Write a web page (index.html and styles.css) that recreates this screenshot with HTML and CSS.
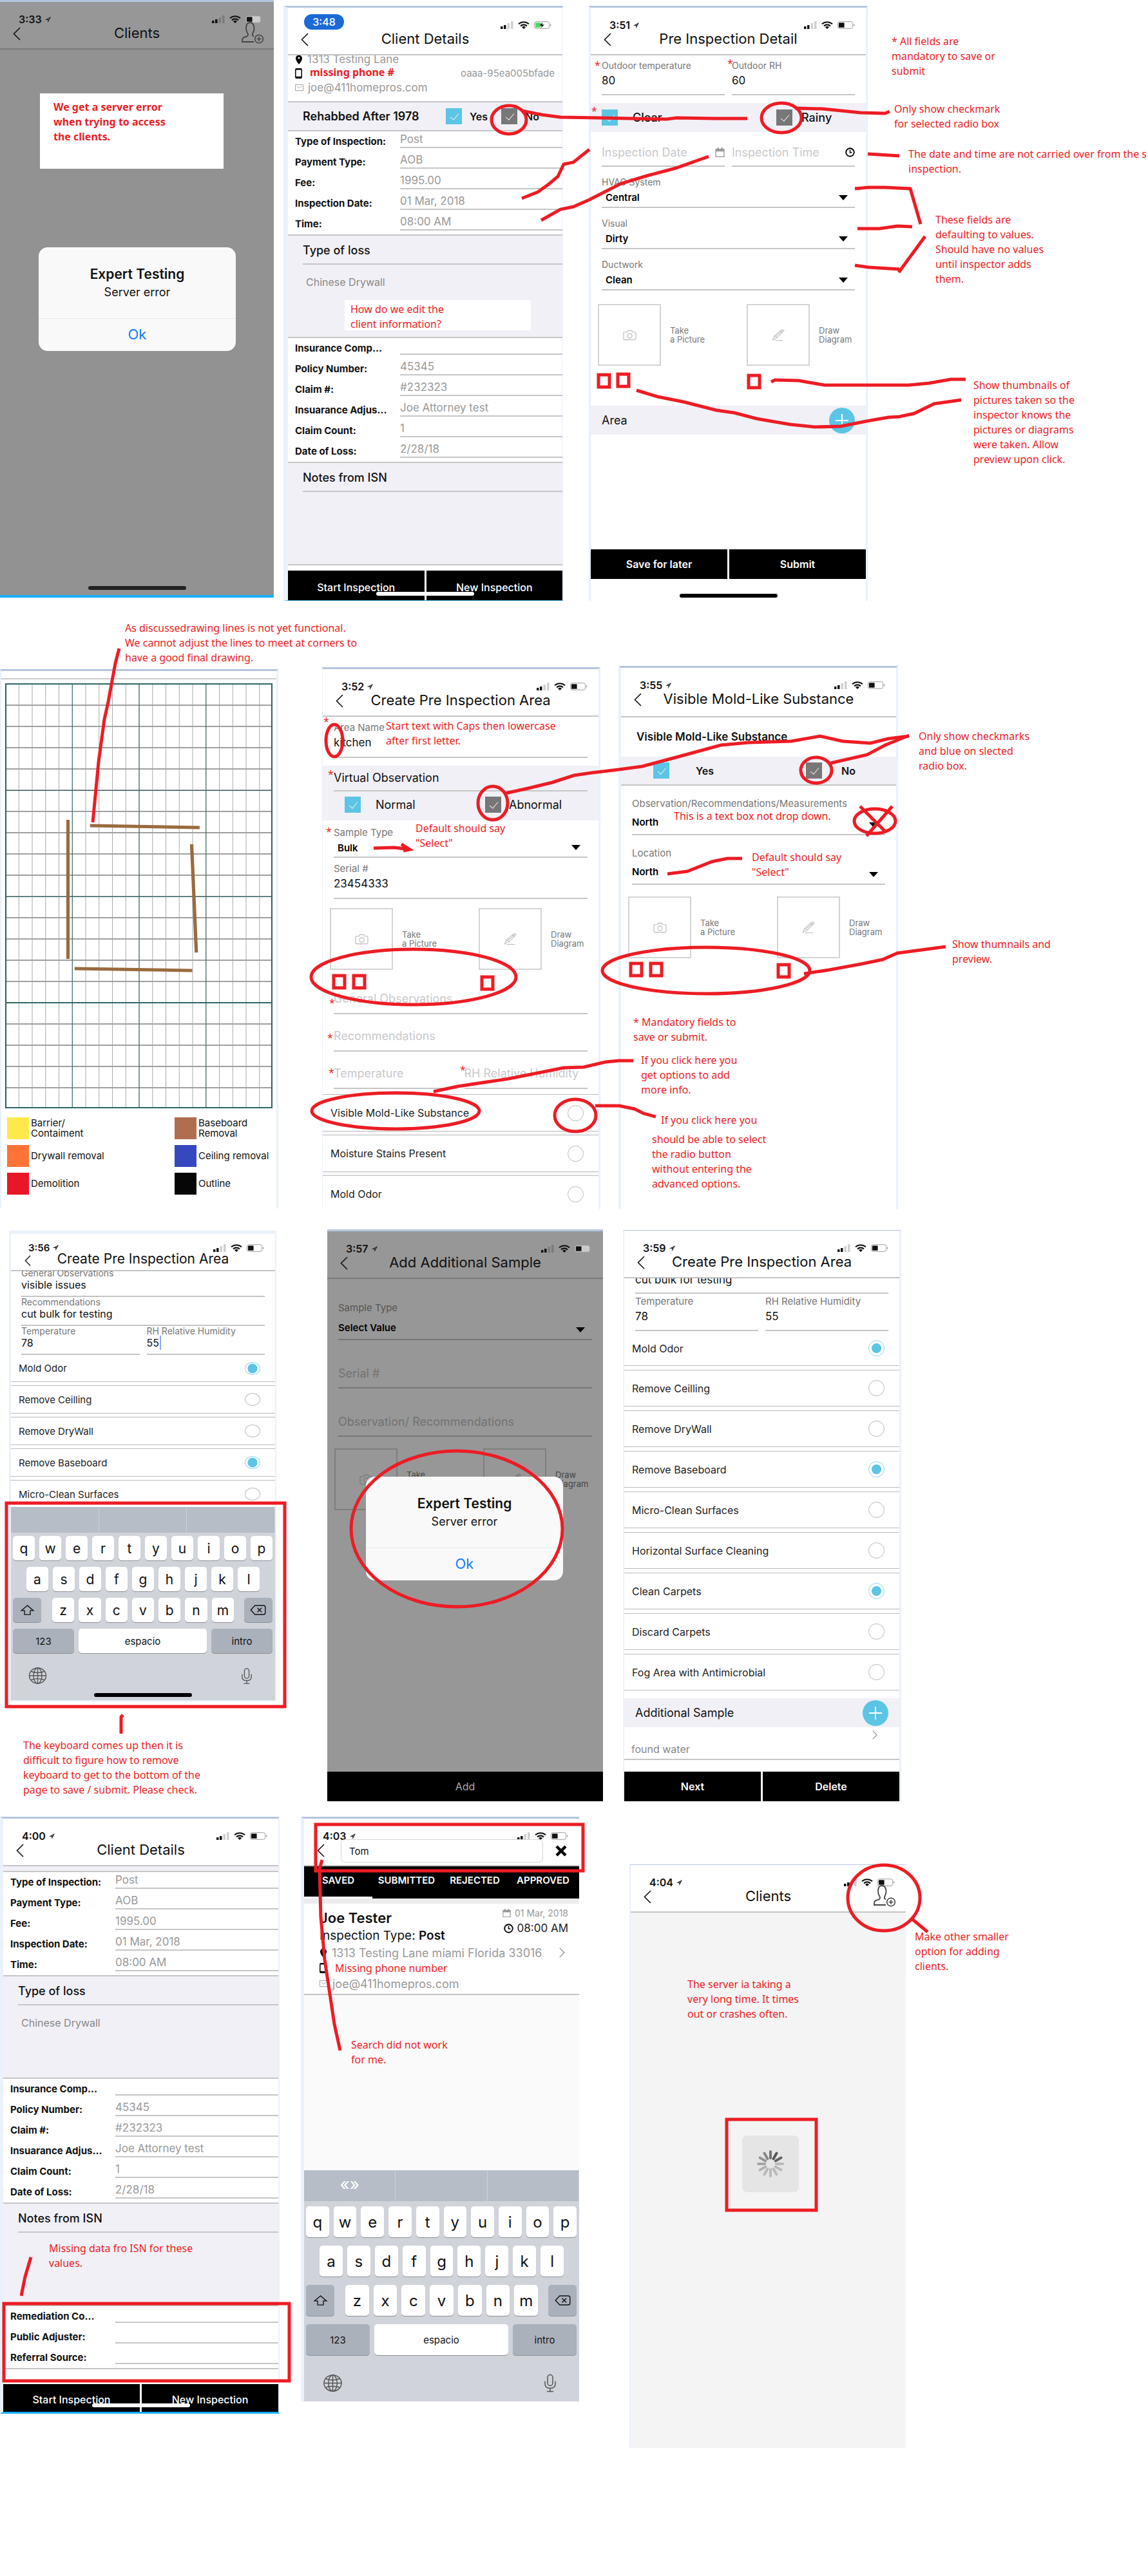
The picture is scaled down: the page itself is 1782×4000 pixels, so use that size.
FILE: index.html
```html
<!DOCTYPE html>
<html lang="en">
<head>
<meta charset="utf-8">
<meta name="viewport" content="width=device-width, initial-scale=1">
<title>Inspection app review board</title>
<link rel="stylesheet" href="styles.css">
</head>
<body>
<svg class="defs" aria-hidden="true">
  <symbol id="i-loc" viewBox="0 0 12 12"><path d="M11 1 1 6.200h4.800V11z" fill="currentColor"/><path d="M8.600 3.300 5 5.200h1.800v2z" fill="#fff" opacity=".5"/></symbol>
  <symbol id="i-signal" viewBox="0 0 20 12"><path d="M0 8h3.500v4H0zM5 6h3.500v6H5z" fill="currentColor"/><path d="M10.500 3H14v9h-3.500zM16 0h3.500v12H16z" fill="currentColor" opacity=".2"/></symbol>
  <symbol id="i-wifi" viewBox="0 0 18 12"><path d="M1 4.300a12 12 0 0 1 16 0M4 7.300a7.600 7.600 0 0 1 10 0" fill="none" stroke="currentColor" stroke-width="2.200"/><path d="M9 12 6 9.200a4.500 4.500 0 0 1 6 0z" fill="currentColor"/></symbol>
  <symbol id="i-batt" viewBox="0 0 28 12"><rect x=".5" y=".5" width="24" height="11" rx="3" fill="#fff" fill-opacity=".5" stroke="#999"/><path d="M26 4v4q1.500-.5 1.500-2T26 4z" fill="#999"/><rect x="2" y="2" width="9" height="8" rx="1" fill="currentColor"/></symbol>
  <symbol id="i-charge" viewBox="0 0 28 12"><rect x=".5" y=".5" width="24" height="11" rx="3" fill="#fff" stroke="#999"/><path d="M26 4v4q1.500-.5 1.500-2T26 4z" fill="#999"/><rect x="2" y="2" width="9" height="8" rx="1" fill="#4cd964"/><path d="M14 1 8 7h4l-1 4 6-6h-4z" fill="#000" stroke="#fff" stroke-width=".5"/></symbol>
  <symbol id="i-back" viewBox="0 0 12 21"><path d="M11 1 1.500 10.500 11 20" fill="none" stroke="currentColor" stroke-width="1.600"/></symbol>
  <symbol id="i-user" viewBox="0 0 34 34"><path d="M19 31H1v-4q1-3 6-4 3-1 3-3 0-2-1.500-4-1.500-3-1.500-6 0-9 6-9t6.500 9q0 4-1.500 6-1.500 3-1 5l2 1.500" fill="none" stroke="currentColor" stroke-width="1.800"/><circle cx="27" cy="26.500" r="6.300" fill="none" stroke="currentColor" stroke-width="1.600"/><path d="M27 23v7M23.500 26.500h7" stroke="currentColor" stroke-width="1.600"/></symbol>
  <symbol id="i-cam" viewBox="0 0 22 17"><path d="M3 3.500h3.500L8 1h6l1.500 2.500H19q2 0 2 2V14q0 2-2 2H3q-2 0-2-2V5.500q0-2 2-2z" fill="none" stroke="currentColor" stroke-width="1.200"/><circle cx="11" cy="9.500" r="3.800" fill="none" stroke="currentColor" stroke-width="1.200"/></symbol>
  <symbol id="i-pen" viewBox="0 0 22 20"><path d="M1.500 18 4 12 16 1.500q2-1 4 1.500L8.500 14.500zM4 12q3 0 4.500 2.500M6 13 17.500 3M14 3.500l4 2.500M5 19h13" fill="none" stroke="currentColor" stroke-width="1.100"/></symbol>
  <symbol id="i-cal" viewBox="0 0 15 15"><path d="M1 3h13v11.500H1zM1 5.500h13" fill="none" stroke="currentColor" stroke-width="1.300"/><path d="M1 3h13v3H1zM3 .500h3V4H3zM9 .500h3V4H9z" fill="currentColor"/></symbol>
  <symbol id="i-clock" viewBox="0 0 16 16"><circle cx="8" cy="8" r="6.700" fill="none" stroke="currentColor" stroke-width="2"/><path d="M8 4v4.500h3" fill="none" stroke="currentColor" stroke-width="1.600"/></symbol>
  <symbol id="i-pin" viewBox="0 0 12 15"><path d="M6 15Q1 9 1 5.500a5 5 0 0 1 10 0Q11 9 6 15z" fill="currentColor"/><circle cx="6" cy="5" r="1.500" fill="#fff"/></symbol>
  <symbol id="i-phone" viewBox="0 0 11 16"><rect x=".8" y=".8" width="9.400" height="14.400" rx="1.500" fill="none" stroke="currentColor" stroke-width="1.500"/><path d="M1 12.800h9v2H1zM1 1h9v1.500H1z" fill="currentColor"/></symbol>
  <symbol id="i-mail" viewBox="0 0 14 11"><path d="M.5.5h13v10H.5zM3 3l4 3.500L11 3" fill="none" stroke="currentColor"/></symbol>
  <symbol id="i-plus" viewBox="0 0 40 40"><circle cx="20" cy="20" r="20" fill="#5cc5e5"/><path d="M20 10v20M10 20h20" stroke="#fff" stroke-width="2"/></symbol>
  <symbol id="i-shift" viewBox="0 0 24 18"><path d="M12 1 1.500 10H7v7h10v-7h5.500z" fill="none" stroke="currentColor" stroke-width="1.500"/></symbol>
  <symbol id="i-del" viewBox="0 0 26 17"><path d="M8 1h14q3 0 3 3v9q0 3-3 3H8L1 8.500zM12 5l7 7M19 5l-7 7" fill="none" stroke="currentColor" stroke-width="1.500"/></symbol>
  <symbol id="i-globe" viewBox="0 0 30 28"><g fill="none" stroke="currentColor" stroke-width="1.500"><ellipse cx="15" cy="14" rx="14" ry="13"/><ellipse cx="15" cy="14" rx="7" ry="13"/><path d="M15 1v26M1 14h28M4 7q11 4 22 0M4 21q11-4 22 0"/></g></symbol>
  <symbol id="i-mic" viewBox="0 0 18 28"><g fill="none" stroke="currentColor" stroke-width="1.500"><rect x="5" y="1" width="8" height="17" rx="4"/><path d="M1 11v4q0 7 8 7t8-7v-4M9 22v5M4 27h10"/></g></symbol>
</svg>

<main class="board">

<section class="screen s1 dim">
  <header class="top"><div class="status"><b>3:33</b><svg class="loc"><use href="#i-loc"/></svg><svg class="sig"><use href="#i-signal"/></svg><svg class="wifi"><use href="#i-wifi"/></svg><svg class="batt"><use href="#i-batt"/></svg></div>
  <div class="bar"><button class="back" aria-label="Back"><svg><use href="#i-back"/></svg></button><h2>Clients</h2><button class="user" aria-label="Add client"><svg><use href="#i-user"/></svg></button></div></header>
  <div class="alert"><h3>Expert Testing</h3><p>Server error</p><button>Ok</button></div>
  <i class="home dark"></i>
</section>

<section class="screen s2">
  <header class="top"><div class="status"><b class="pill">3:48</b><svg class="sig"><use href="#i-signal"/></svg><svg class="wifi"><use href="#i-wifi"/></svg><svg class="batt"><use href="#i-charge"/></svg></div>
  <div class="bar"><button class="back" aria-label="Back"><svg><use href="#i-back"/></svg></button><h2>Client Details</h2></div></header>
  <div class="contact">
    <p><svg class="pin"><use href="#i-pin"/></svg>1313 Testing Lane</p>
    <p><svg class="cell"><use href="#i-phone"/></svg><span class="id">oaaa-95ea005bfade</span></p>
    <p><svg class="mail"><use href="#i-mail"/></svg>joe@411homepros.com</p>
  </div>
  <div class="band line rehab"><strong>Rehabbed After 1978</strong><label><input type="checkbox" class="on" checked>Yes</label><label><input type="checkbox" checked>No</label></div>
  <div class="kvs">
    <label><span>Type of Inspection:</span><input value="Post"></label>
    <label><span>Payment Type:</span><input value="AOB"></label>
    <label><span>Fee:</span><input value="1995.00"></label>
    <label><span>Inspection Date:</span><input value="01 Mar, 2018"></label>
    <label><span>Time:</span><input value="08:00 AM"></label>
  </div>
  <div class="block"><h3>Type of loss</h3><p>Chinese Drywall</p></div>
  <div class="kvs">
    <label><span>Insurance Comp...</span><input value=""></label>
    <label><span>Policy Number:</span><input value="45345"></label>
    <label><span>Claim #:</span><input value="#232323"></label>
    <label><span>Insuarance Adjus...</span><input value="Joe Attorney test"></label>
    <label><span>Claim Count:</span><input value="1"></label>
    <label><span>Date of Loss:</span><input value="2/28/18"></label>
  </div>
  <div class="block"><h3>Notes from ISN</h3></div>
  <footer class="actions"><button>Start Inspection</button><button>New Inspection</button></footer>
  <i class="home light"></i>
</section>

<section class="screen s3">
  <header class="top"><div class="status"><b>3:51</b><svg class="loc"><use href="#i-loc"/></svg><svg class="sig"><use href="#i-signal"/></svg><svg class="wifi"><use href="#i-wifi"/></svg><svg class="batt"><use href="#i-batt"/></svg></div>
  <div class="bar"><button class="back" aria-label="Back"><svg><use href="#i-back"/></svg></button><h2>Pre Inspection Detail</h2></div></header>
  <div class="duo"><label class="field">Outdoor temperature<input value="80"></label><label class="field">Outdoor RH<input value="60"></label></div>
  <div class="band gap weather"><label><input type="checkbox" class="on" checked>Clear</label><label><input type="checkbox" checked>Rainy</label></div>
  <div class="duo ph"><label><input placeholder="Inspection Date" aria-label="Inspection Date"><svg class="cal"><use href="#i-cal"/></svg></label><label><input placeholder="Inspection Time" aria-label="Inspection Time"><svg class="clock"><use href="#i-clock"/></svg></label></div>
  <label class="pick in">HVAC System<select><option>Central</option></select></label>
  <label class="pick in">Visual<select><option>Dirty</option></select></label>
  <label class="pick in">Ductwork<select><option>Clean</option></select></label>
  <div class="shots"><div><button aria-label="Take a Picture"><svg class="cam"><use href="#i-cam"/></svg></button><span>Take<br>a Picture</span></div><div><button aria-label="Draw Diagram"><svg class="pen"><use href="#i-pen"/></svg></button><span>Draw<br>Diagram</span></div></div>
  <div class="band add"><span>Area</span><button aria-label="Add area"><svg><use href="#i-plus"/></svg></button></div>
  <footer class="actions bold"><button>Save for later</button><button>Submit</button></footer>
  <i class="home black"></i>
</section>

<section class="screen s4">
  <svg class="grid" viewBox="0 0 400 660" preserveAspectRatio="none" role="img" aria-label="Floor plan">
    <defs>
      <pattern id="cell" width="20" height="33" patternUnits="userSpaceOnUse"><path d="M0 0V33" stroke="#a9adad" stroke-width="2"/><path d="M0 0H20" stroke="#a0a0a0" stroke-width="4"/></pattern>
      <pattern id="major" width="100" height="165" patternUnits="userSpaceOnUse"><path d="M0 0V165" stroke="#2f6464" stroke-width="2"/><path d="M0 0H100" stroke="#2f6464" stroke-width="4"/></pattern>
    </defs>
    <rect width="400" height="660" fill="url(#cell)"/><rect width="400" height="660" fill="url(#major)"/><rect x="1" y="1" width="398" height="658" fill="none" stroke="#2f6464" stroke-width="2"/>
    <g stroke="#9a6a3e" stroke-width="5"><path d="M94 212V428M127 221l164 3M279 250l7 168M104 443l176 3"/></g>
  </svg>
  <ul class="legend">
    <li><i class="c1"></i><span>Barrier/<br>Contaiment</span></li><li><i class="c2"></i><span>Baseboard<br>Removal</span></li>
    <li><i class="c3"></i><span>Drywall removal</span></li><li><i class="c4"></i><span>Ceiling removal</span></li>
    <li><i class="c5"></i><span>Demolition</span></li><li><i class="c6"></i><span>Outline</span></li>
  </ul>
</section>

<section class="screen s5">
  <header class="top"><div class="status"><b>3:52</b><svg class="loc"><use href="#i-loc"/></svg><svg class="sig"><use href="#i-signal"/></svg><svg class="wifi"><use href="#i-wifi"/></svg><svg class="batt"><use href="#i-batt"/></svg></div>
  <div class="bar"><button class="back" aria-label="Back"><svg><use href="#i-back"/></svg></button><h2>Create Pre Inspection Area</h2></div></header>
  <label class="field in">Area Name<input value="kitchen"></label>
  <div class="band gap virtual"><h3>Virtual Observation</h3><div><label><input type="checkbox" class="on" checked>Normal</label><label><input type="checkbox" checked>Abnormal</label></div></div>
  <label class="pick tight">Sample Type<select class="in"><option>Bulk</option></select></label>
  <label class="field">Serial #<input value="23454333"></label>
  <div class="shots"><div><button aria-label="Take a Picture"><svg class="cam"><use href="#i-cam"/></svg></button><span>Take<br>a Picture</span></div><div><button aria-label="Draw Diagram"><svg class="pen"><use href="#i-pen"/></svg></button><span>Draw<br>Diagram</span></div></div>
  <div class="blank"><input placeholder="General Observations" aria-label="General Observations"><input placeholder="Recommendations" aria-label="Recommendations"><div class="duo"><input placeholder="Temperature" aria-label="Temperature"><input placeholder="RH Relative Humidity" aria-label="RH Relative Humidity"></div></div>
  <div class="opts"><label>Visible Mold-Like Substance<input type="radio"></label><label>Moisture Stains Present<input type="radio"></label><label>Mold Odor<input type="radio"></label></div>
</section>

<section class="screen s6">
  <header class="top"><div class="status"><b>3:55</b><svg class="loc"><use href="#i-loc"/></svg><svg class="sig"><use href="#i-signal"/></svg><svg class="wifi"><use href="#i-wifi"/></svg><svg class="batt"><use href="#i-batt"/></svg></div>
  <div class="bar"><button class="back" aria-label="Back"><svg><use href="#i-back"/></svg></button><h2>Visible Mold-Like Substance</h2></div></header>
  <h3 class="sub">Visible Mold-Like Substance</h3>
  <div class="band line mold"><label><input type="checkbox" class="on" checked>Yes</label><label><input type="checkbox" checked>No</label></div>
  <label class="pick">Observation/Recommendations/Measurements<select><option>North</option></select></label>
  <label class="pick">Location<select><option>North</option></select></label>
  <div class="shots"><div><button aria-label="Take a Picture"><svg class="cam"><use href="#i-cam"/></svg></button><span>Take<br>a Picture</span></div><div><button aria-label="Draw Diagram"><svg class="pen"><use href="#i-pen"/></svg></button><span>Draw<br>Diagram</span></div></div>
</section>

<section class="screen s7">
  <header class="top"><div class="status"><b>3:56</b><svg class="loc"><use href="#i-loc"/></svg><svg class="sig"><use href="#i-signal"/></svg><svg class="wifi"><use href="#i-wifi"/></svg><svg class="batt"><use href="#i-batt"/></svg></div>
  <div class="bar"><button class="back" aria-label="Back"><svg><use href="#i-back"/></svg></button><h2>Create Pre Inspection Area</h2></div></header>
  <div class="scrolled"><label class="field">General Observations<input value="visible issues"></label>
  <label class="field">Recommendations<input value="cut bulk for testing"></label>
  <div class="duo"><label class="field">Temperature<input value="78"></label><label class="field">RH Relative Humidity<input class="caret" value="55"></label></div>
  <div class="opts"><label>Mold Odor<input type="radio" checked></label><label>Remove Ceilling<input type="radio"></label><label>Remove DryWall<input type="radio"></label><label>Remove Baseboard<input type="radio" checked></label><label>Micro-Clean Surfaces<input type="radio"></label></div></div>
  <div class="kb">
    <div class="sugg"><span></span><span></span><span></span></div>
    <div class="keys"><button>q</button><button>w</button><button>e</button><button>r</button><button>t</button><button>y</button><button>u</button><button>i</button><button>o</button><button>p</button></div>
    <div class="keys mid"><button>a</button><button>s</button><button>d</button><button>f</button><button>g</button><button>h</button><button>j</button><button>k</button><button>l</button></div>
    <div class="keys low"><button class="fn" aria-label="Shift"><svg class="shift"><use href="#i-shift"/></svg></button><button>z</button><button>x</button><button>c</button><button>v</button><button>b</button><button>n</button><button>m</button><button class="fn" aria-label="Delete"><svg class="del"><use href="#i-del"/></svg></button></div>
    <div class="keys words"><button class="fn">123</button><button class="space">espacio</button><button class="fn">intro</button></div>
    <div class="tools"><button aria-label="Language"><svg class="globe"><use href="#i-globe"/></svg></button><button aria-label="Dictate"><svg class="mic"><use href="#i-mic"/></svg></button></div>
  </div>
  <i class="home black"></i>
</section>

<section class="screen s8 dim">
  <header class="top"><div class="status"><b>3:57</b><svg class="loc"><use href="#i-loc"/></svg><svg class="sig"><use href="#i-signal"/></svg><svg class="wifi"><use href="#i-wifi"/></svg><svg class="batt"><use href="#i-batt"/></svg></div>
  <div class="bar"><button class="back" aria-label="Back"><svg><use href="#i-back"/></svg></button><h2>Add Additional Sample</h2></div></header>
  <label class="pick">Sample Type<select><option>Select Value</option></select></label>
  <div class="blank"><input placeholder="Serial #" aria-label="Serial number"><input placeholder="Observation/ Recommendations" aria-label="Observation or recommendations"></div>
  <div class="shots"><div><button aria-label="Take a Picture"><svg class="cam"><use href="#i-cam"/></svg></button><span>Take<br>a Picture</span></div><div><button aria-label="Draw Diagram"><svg class="pen"><use href="#i-pen"/></svg></button><span>Draw<br>Diagram</span></div></div>
  <footer class="actions"><button>Add</button></footer>
  <div class="alert"><h3>Expert Testing</h3><p>Server error</p><button>Ok</button></div>
</section>

<section class="screen s9">
  <header class="top"><div class="status"><b>3:59</b><svg class="loc"><use href="#i-loc"/></svg><svg class="sig"><use href="#i-signal"/></svg><svg class="wifi"><use href="#i-wifi"/></svg><svg class="batt"><use href="#i-batt"/></svg></div>
  <div class="bar"><button class="back" aria-label="Back"><svg><use href="#i-back"/></svg></button><h2>Create Pre Inspection Area</h2></div></header>
  <div class="cut"><input value="cut bulk for testing" aria-label="Recommendations"></div>
  <div class="duo"><label class="field">Temperature<input value="78"></label><label class="field">RH Relative Humidity<input value="55"></label></div>
  <div class="opts"><label>Mold Odor<input type="radio" checked></label><label>Remove Ceilling<input type="radio"></label><label>Remove DryWall<input type="radio"></label><label>Remove Baseboard<input type="radio" checked></label><label>Micro-Clean Surfaces<input type="radio"></label><label>Horizontal Surface Cleaning<input type="radio"></label><label>Clean Carpets<input type="radio" checked></label><label>Discard Carpets<input type="radio"></label><label>Fog Area with Antimicrobial<input type="radio"></label></div>
  <div class="band add"><span>Additional Sample</span><button aria-label="Add sample"><svg><use href="#i-plus"/></svg></button></div>
  <a class="sample" href="#sample">found water<svg class="next"><use href="#i-back"/></svg></a>
  <footer class="actions bold"><button>Next</button><button>Delete</button></footer>
</section>

<section class="screen s10">
  <header class="top"><div class="status"><b>4:00</b><svg class="loc"><use href="#i-loc"/></svg><svg class="sig"><use href="#i-signal"/></svg><svg class="wifi"><use href="#i-wifi"/></svg><svg class="batt"><use href="#i-batt"/></svg></div>
  <div class="bar"><button class="back" aria-label="Back"><svg><use href="#i-back"/></svg></button><h2>Client Details</h2></div></header>
  <div class="sliver"></div>
  <div class="kvs">
    <label><span>Type of Inspection:</span><input value="Post"></label>
    <label><span>Payment Type:</span><input value="AOB"></label>
    <label><span>Fee:</span><input value="1995.00"></label>
    <label><span>Inspection Date:</span><input value="01 Mar, 2018"></label>
    <label><span>Time:</span><input value="08:00 AM"></label>
  </div>
  <div class="block"><h3>Type of loss</h3><p>Chinese Drywall</p></div>
  <div class="kvs">
    <label><span>Insurance Comp...</span><input value=""></label>
    <label><span>Policy Number:</span><input value="45345"></label>
    <label><span>Claim #:</span><input value="#232323"></label>
    <label><span>Insuarance Adjus...</span><input value="Joe Attorney test"></label>
    <label><span>Claim Count:</span><input value="1"></label>
    <label><span>Date of Loss:</span><input value="2/28/18"></label>
  </div>
  <div class="block"><h3>Notes from ISN</h3></div>
  <div class="kvs">
    <label><span>Remediation Co...</span><input value=""></label>
    <label><span>Public Adjuster:</span><input value=""></label>
    <label><span>Referral Source:</span><input value=""></label>
  </div>
  <footer class="actions"><button>Start Inspection</button><button>New Inspection</button></footer>
  <i class="home light"></i>
</section>

<section class="screen s11">
  <header class="top"><div class="status"><b>4:03</b><svg class="loc"><use href="#i-loc"/></svg><svg class="sig"><use href="#i-signal"/></svg><svg class="wifi"><use href="#i-wifi"/></svg><svg class="batt"><use href="#i-batt"/></svg></div>
  <div class="bar"><button class="back" aria-label="Back"><svg><use href="#i-back"/></svg></button><input class="search" value="Tom" aria-label="Search clients"><button class="clear" aria-label="Clear"><svg viewBox="0 0 20 18"><path d="m3 2 14 14M17 2 3 16" stroke="#000" stroke-width="4.500"/></svg></button></div></header>
  <nav class="tabs"><a class="cur" href="#saved">SAVED</a><a href="#submitted">SUBMITTED</a><a href="#rejected">REJECTED</a><a href="#approved">APPROVED</a></nav>
  <article class="client">
    <div class="when"><p><svg class="cal"><use href="#i-cal"/></svg>01 Mar, 2018</p><p class="at"><svg class="clock"><use href="#i-clock"/></svg>08:00 AM</p></div>
    <h3>Joe Tester</h3>
    <p class="type">Inspection Type: <b>Post</b></p>
    <p class="row"><svg class="pin"><use href="#i-pin"/></svg>1313 Testing Lane miami Florida 33016<svg class="next"><use href="#i-back"/></svg></p>
    <p class="row"><svg class="cell"><use href="#i-phone"/></svg></p>
    <p class="row"><svg class="mail"><use href="#i-mail"/></svg>joe@411homepros.com</p>
  </article>
  <div class="kb tall">
    <div class="sugg"><span>«»</span><span></span><span></span></div>
    <div class="keys"><button>q</button><button>w</button><button>e</button><button>r</button><button>t</button><button>y</button><button>u</button><button>i</button><button>o</button><button>p</button></div>
    <div class="keys mid"><button>a</button><button>s</button><button>d</button><button>f</button><button>g</button><button>h</button><button>j</button><button>k</button><button>l</button></div>
    <div class="keys low"><button class="fn" aria-label="Shift"><svg class="shift"><use href="#i-shift"/></svg></button><button>z</button><button>x</button><button>c</button><button>v</button><button>b</button><button>n</button><button>m</button><button class="fn" aria-label="Delete"><svg class="del"><use href="#i-del"/></svg></button></div>
    <div class="keys words"><button class="fn">123</button><button class="space">espacio</button><button class="fn">intro</button></div>
    <div class="tools"><button aria-label="Language"><svg class="globe"><use href="#i-globe"/></svg></button><button aria-label="Dictate"><svg class="mic"><use href="#i-mic"/></svg></button></div>
  </div>
</section>

<section class="screen s12">
  <header class="top"><div class="status"><b>4:04</b><svg class="loc"><use href="#i-loc"/></svg><svg class="sig"><use href="#i-signal"/></svg><svg class="wifi"><use href="#i-wifi"/></svg><svg class="batt"><use href="#i-batt"/></svg></div>
  <div class="bar"><button class="back" aria-label="Back"><svg><use href="#i-back"/></svg></button><h2>Clients</h2><button class="user" aria-label="Add client"><svg><use href="#i-user"/></svg></button></div></header>
  <div class="loading"><svg viewBox="-22 -22 44 44" stroke-width="4" stroke-linecap="round" stroke="#555">
    <path d="M0-9v-10" opacity=".8"/><path d="M0-9v-10" transform="rotate(30)"/><path d="M0-9v-10" transform="rotate(60)" opacity=".9"/><path d="M0-9v-10" transform="rotate(90)" opacity=".3"/><path d="M0-9v-10" transform="rotate(120)" opacity=".3"/><path d="M0-9v-10" transform="rotate(150)" opacity=".3"/><path d="M0-9v-10" transform="rotate(180)" opacity=".3"/><path d="M0-9v-10" transform="rotate(210)" opacity=".3"/><path d="M0-9v-10" transform="rotate(240)" opacity=".35"/><path d="M0-9v-10" transform="rotate(270)" opacity=".45"/><path d="M0-9v-10" transform="rotate(300)" opacity=".55"/><path d="M0-9v-10" transform="rotate(330)" opacity=".65"/>
  </svg></div>
</section>

<p class="note n1">We get a server error<br>when trying to access<br>the clients.</p>
<p class="note n2">missing phone #</p>
<p class="note n3">How do we edit the<br>client information?</p>
<p class="note n4">* All fields are<br>mandatory to save or<br>submit</p>
<p class="note n5">Only show checkmark<br>for selected radio box</p>
<p class="note n6">The date and time are not carried over from the s<br>inspection.</p>
<p class="note n7">These fields are<br>defaulting to values.<br>Should have no values<br>until inspector adds<br>them.</p>
<p class="note n8">Show thumbnails of<br>pictures taken so the<br>inspector knows the<br>pictures or diagrams<br>were taken. Allow<br>preview upon click.</p>
<p class="note n9">As discussedrawing lines is not yet functional.<br>We cannot adjust the lines to meet at corners to<br>have a good final drawing.</p>
<p class="note n10">Start text with Caps then lowercase<br>after first letter.</p>
<p class="note n11">Default should say<br>"Select"</p>
<p class="note n12">Only show checkmarks<br>and blue on slected<br>radio box.</p>
<p class="note n13">This is a text box not drop down.</p>
<p class="note n14">Default should say<br>"Select"</p>
<p class="note n15">Show thumnails and<br>preview.</p>
<p class="note n16">* Mandatory fields to<br>save or submit.</p>
<p class="note n17">If you click here you<br>get options to add<br>more info.</p>
<p class="note n18">If you click here you</p>
<p class="note n19">should be able to select<br>the radio button<br>without entering the<br>advanced options.</p>
<p class="note n20">The keyboard comes up then it is<br>difficult to figure how to remove<br>keyboard to get to the bottom of the<br>page to save / submit. Please check.</p>
<p class="note n21">Missing phone number</p>
<p class="note n22">Search did not work<br>for me.</p>
<p class="note n23">Missing data fro ISN for these<br>values.</p>
<p class="note n24">The server ia taking a<br>very long time. It times<br>out or crashes often.</p>
<p class="note n25">Make other smaller<br>option for adding<br>clients.</p>
<p class="note a1">*</p><p class="note a2">*</p><p class="note a3">*</p><p class="note a4">*</p><p class="note a5">*</p><p class="note a6">*</p><p class="note a7">*</p><p class="note a8">*</p><p class="note a9">*</p><p class="note a10">*</p>

<svg class="ink" width="1782" height="4000" viewBox="0 0 1782 4000" aria-hidden="true">
  <g class="pen-5">
    <ellipse cx="790" cy="186" rx="27" ry="22"/><ellipse cx="1213" cy="183" rx="31" ry="23"/>
    <path d="M810 172l30 6 30 4 60 1 105 2 15-2 60 1h50"/>
    <path d="M1234 168l43 1 59 6 38 1 7-3M1347 239l49 3"/>
    <path d="M810 308l25-10 18-13 13-11 9-19 15-3 25-20"/>
    <path d="M840 342l30-17 20-4 25-11 49-25 40-12 45-12 51-18"/>
    <path d="M1327 293l21-2h26l39 2 16 55M1331 355h34l28-4 23 1M1327 412l21 3 48 3M1395 423l41-56"/>
    <path d="M1197 593l6-3 37 1 40 7h130l32-3 34-6h23"/>
    <path d="M988 606l33 10 40 8 51 13 28 4 34 9 52 9 39 4 40-1 40-8 34-6 17-1 23-5 31-15 42-6"/>
    <path d="M929 582h17v19h-17zM959 581h17v19h-17zM1162 583h17v19h-17z"/>
    <path d="M185 1007l-6 23-11 60-6 27-9 66-9 94"/>
    <ellipse cx="519" cy="1150" rx="13" ry="25"/><ellipse cx="765" cy="1247" rx="23" ry="26"/>
    <path d="M784 1232l36-8 37-9 34-11 27-4 42-5 37-5 56-15 66-18 43-4 66-2 45-8 35 8 43 3 28-7 32-4"/>
    <path d="M1289 1185l57-13 28-15 37-15"/><ellipse cx="1267" cy="1196" rx="24" ry="20"/>
    <path d="M580 1317l32-1 24 3M623 1311l13 8-10 2"/>
    <ellipse cx="642" cy="1517" rx="159" ry="43"/><path d="M518 1515h17v19h-17zM549 1515h17v19h-17zM748 1517h17v19h-17z"/>
    <ellipse cx="614" cy="1725" rx="130" ry="28"/><ellipse cx="893" cy="1732" rx="32" ry="25"/>
    <path d="M924 1717h37l24 5 14 7 19 5M673 1695l37-8 80-12 85-17 31-1 34-8 21-2h22"/>
    <ellipse cx="1096" cy="1507" rx="161" ry="36"/><path d="M1248 1512l39-6 49-9 34-7 23-10 75-10"/>
    <path d="M979 1496h17v19h-17zM1010 1496h17v19h-17zM1208 1498h17v19h-17z"/>
    <ellipse cx="1358" cy="1275" rx="32" ry="19"/><path d="M1335 1252l39 39M1385 1252l-40 46"/>
    <path d="M1036 1357l31-4 38-15 24-5h23"/>
    <path d="M10 2334h432v316H10zM191 2663l-3 3v26"/>
    <ellipse cx="709" cy="2374" rx="164" ry="121"/>
    <path d="M490 2833h415v72H490z"/><path d="M500 2888l-4 14 2 75 6 66 15 100 9 41"/>
    <path d="M6 3577h443v120H6zM48 3505l-9 30-6 30"/>
    <path d="M1128 3291h139v141h-139z"/>
    <ellipse cx="1372" cy="2947" rx="56" ry="51"/><path d="M1416 2980l24 20"/>
  </g>
</svg>
</main>
</body>
</html>
```

FILE: styles.css
```css
* { box-sizing: border-box; }
body { margin: 0; background: #fff; font-family: Inter, "Liberation Sans", sans-serif; color: #111; }
h2, h3, p, ul { margin: 0; padding: 0; font-weight: 400; }
button, input, select { font: inherit; color: inherit; border: 0; padding: 0; margin: 0; background: none; border-radius: 0; min-width: 0; }
button { display: flex; align-items: center; justify-content: center; }
svg { display: block; flex: none; }
.defs { position: absolute; width: 0; height: 0; }
.board { position: relative; min-height: 4000px; overflow: hidden; }

/* screens pinned on the board */
.screen { --rule: #c6c6c6; position: absolute; width: 433px; display: flex; flex-direction: column; overflow: hidden; background: #fff; border: solid #e9f1fb; border-width: 3px 3px 0; border-top-color: #b4c6de; }
.s1 { left: 0; top: 0; width: 425px; height: 928px; border-width: 3px 0 4px; border-bottom-color: #18b0fc; }
.s2 { left: 440px; top: 9px; height: 924px; width: 434px; border-width: 3px 1px 1px 7px; border-bottom-color: #38a8e0; }
.s3 { left: 914px; top: 9px; height: 924px; }
.s4 { left: 0; top: 1039px; width: 432px; height: 838px; border-width: 3px 3px 0 2px; }
.s5 { left: 500px; top: 1036px; width: 432px; height: 841px; border-left-width: 1px; }
.s6 { left: 960px; top: 1034px; width: 434px; height: 843px; border-left-width: 4px; }
.s7 { left: 14px; top: 1911px; width: 415px; height: 731px; border-top: 5px solid #e9f1fb; border-right-width: 2px; border-bottom: 2px solid #e9f1fb; }
.s8 { left: 508px; top: 1909px; width: 428px; height: 888px; border-width: 3px 0 0; }
.s9 { left: 967px; top: 1910px; width: 432px; height: 887px; border-width: 1px 3px 0 2px; }
.s10 { left: 0; top: 2821px; width: 434px; height: 927px; border-width: 3px 2px 3px 5px; border-bottom-color: #18b0fc; }
.s11 { left: 467px; top: 2821px; width: 432px; height: 908px; border-width: 3px 0 0 5px; }
.s12 { left: 977px; top: 2895px; width: 429px; height: 906px; border-width: 1px 0 0 2px; background: #f4f4f4; }
.dim { --rule: #777; background: #929292; }
.s8.dim { background: #979797; }

.top { flex: none; height: 74px; padding-top: 18px; border-bottom: 2px solid #c4c4c4; background: #fff; }
.dim .top { background: #979797; border-color: #7a7a7a; }
.s6 .top { height: 77px; }
.status { display: flex; align-items: center; height: 18px; padding: 0 17px 0 29px; gap: 7px; font-size: 16px; }
.status b { font-weight: 600; }
.status .loc { width: 11px; height: 11px; margin-right: auto; margin-left: -3px; }
.sig { width: 20px; height: 12px; } .wifi { width: 18px; height: 12px; } .batt { width: 27px; height: 12px; }
.status .pill { background: #1b6ad8; color: #fff; border-radius: 12px; width: 62px; line-height: 24px; text-align: center; font-weight: 500; margin: -10px auto 0 -4px; }
.bar { display: grid; grid-template-columns: 50px 1fr 50px; height: 24px; }
.bar h2 { grid-column: 2; font-size: 22px; line-height: 24px; text-align: center; white-space: nowrap; display: flex; justify-content: center; }
.back { justify-content: start; padding-left: 20px; height: 27px; }
.back svg { width: 12px; height: 21px; }
.user { grid-column: 3; justify-content: end; align-items: start; padding-right: 16px; height: 34px; margin-top: -5px; }
.user svg { width: 34px; height: 34px; color: #444; }

.alert { position: absolute; left: 60px; top: 381px; width: 306px; height: 161px; border-radius: 14px; background: #f9f9f9; text-align: center; padding-top: 28px; }
.alert h3 { font-size: 21px; font-weight: 600; line-height: 28px; }
.alert p { font-size: 18px; line-height: 28px; }
.alert button { width: 100%; margin-top: 26px; height: 51px; border-top: 1px solid #e6e6e6; font-size: 22px; color: #157efb; padding-bottom: 2px; }
.home { position: absolute; left: 50%; margin-left: -76px; width: 152px; height: 6px; border-radius: 3px; }
.home.dark { bottom: 8px; background: #222; } .home.light { bottom: 7px; background: #fff; } .home.black { bottom: 5px; background: #000; }

.contact { height: 73px; border-bottom: 2px solid var(--rule); overflow: hidden; padding: 0 12px 0 11px; font-size: 17px; line-height: 22px; color: #999; }
.contact p { display: flex; align-items: center; gap: 7px; height: 22px; }
.contact p:first-child { margin-top: -5px; }
.contact .id { margin-left: auto; font-size: 15px; }
.pin { width: 12px; height: 15px; color: #000; } .cell { width: 11px; height: 16px; color: #000; } .mail { width: 13px; height: 12px; }

.band { background: #f1f0f7; height: 45px; flex: none; display: flex; align-items: center; font-size: 17px; font-weight: 500; }
.band.line { border-bottom: 2px solid var(--rule); }
.band.gap { margin-top: 12px; }
.band label { display: flex; flex: none; align-items: center; }
[type=checkbox] { appearance: none; width: 25px; height: 25px; background: #777; position: relative; flex: none; }
[type=checkbox].on { background: #5cc5e5; }
[type=checkbox]::before { content: ""; position: absolute; left: 10px; top: 5px; width: 6px; height: 12px; border: solid #eee; border-width: 0 1px 1px 0; transform: rotate(40deg); }
.rehab { padding-left: 23px; font-size: 18px; }
.rehab strong { font-weight: 600; width: 222px; white-space: nowrap; }
.rehab label { gap: 12px; width: 86px; white-space: nowrap; font-size: 16px; font-weight: 600; }
.weather { padding-left: 17px; font-size: 18px; } .weather label { gap: 23px; width: 271px; } .weather label + label { gap: 14px; width: auto; }
.mold { padding-left: 50px; font-size: 16px; font-weight: 600; } .mold label { gap: 41px; width: 237px; } .mold label + label { gap: 30px; width: auto; }
.virtual.band { display: block; height: 85px; padding: 0 17px; font-size: 18px; font-weight: 400; }
.virtual h3 { font-size: 18px; line-height: 38px; border-bottom: 2px solid var(--rule); }
.virtual div { display: flex; padding: 8px 0 0 17px; } .virtual label { width: 218px; gap: 23px; } .virtual label + label { gap: 12px; width: auto; }
.band.add { padding: 0 17px; justify-content: space-between; font-size: 18px; font-weight: 400; } .add svg { width: 40px; height: 40px; }

.kvs { flex: none; padding: 0 0 6px 11px; border-bottom: 2px solid var(--rule); }
.kvs label { display: flex; align-items: end; height: 32px; }
.kvs label:first-child { height: 26px; }
.kvs span { width: 163px; flex: none; font-size: 15px; font-weight: 700; line-height: 20px; white-space: nowrap; }
.kvs input { flex: 1; height: 26px; font-size: 17px; color: #999; border-bottom: 2px solid var(--rule); }
.block { flex: none; height: 159px; background: #f1f0f7; border-bottom: 2px solid var(--rule); padding-left: 23px; }
.block h3 { height: 45px; padding-top: 11px; font-size: 18px; font-weight: 500; line-height: 24px; border-bottom: 2px solid var(--rule); }
.block p { padding: 17px 0 0 5px; font-size: 16px; line-height: 20px; color: #888; }
.sliver { height: 9px; flex: none; background: #f1f0f7; border-bottom: 2px solid var(--rule); }

.actions { display: flex; gap: 3px; margin-top: auto; flex: none; }
.actions button { flex: 1; height: 46px; background: #000; color: #fff; font-size: 16px; font-weight: 500; }
.bold button { font-weight: 600; }
.s3 .actions { margin-bottom: 34px; }
.dim .actions button { color: #aaa; font-weight: 400; }
.s10 .actions button { height: 43px; padding-top: 4px; } .s2 .actions button { padding-top: 6px; }

.field { display: block; margin: 0 17px; padding-top: 8px; height: 62px; font-size: 14px; line-height: 16px; color: #777; flex: none; border-bottom: 2px solid var(--rule); white-space: nowrap; }
.field input { display: block; width: 100%; height: 24px; margin-top: 3px; font-size: 17px; color: #111; }
.duo { display: grid; grid-template-columns: minmax(0, 1fr) minmax(0, 1fr); gap: 11px; margin: 0 17px; flex: none; }
.duo .field { margin: 0; }
.ph label { display: flex; align-items: center; height: 54px; padding-top: 10px; border-bottom: 2px solid var(--rule); }
.ph input { flex: 1; width: 100%; font-size: 18px; }
::placeholder { color: #c9c9cc; opacity: 1; }
.cal { width: 15px; height: 15px; color: #999; } .clock { width: 15px; height: 15px; color: #000; }
.pick { position: relative; display: block; margin: 0 17px; height: 64px; padding-top: 16px; font-size: 14px; line-height: 16px; color: #777; flex: none; border-bottom: 2px solid var(--rule); white-space: nowrap; }
.pick select { appearance: none; display: block; width: 100%; height: 32px; font-size: 15px; font-weight: 600; color: #000; }
.pick.in select, .pick select.in { padding-left: 6px; }
.pick::after { content: ""; position: absolute; right: 11px; bottom: 10px; border: 7px solid transparent; border-width: 8px 7px 0; border-top-color: #000; }
.s5 .field { height: 64px; padding-top: 9px; font-size: 15px; } .s5 .field input { margin-top: 3px; }
.s5 .pick { height: 58px; padding-top: 11px; font-size: 15px; }
.s6 .pick { height: 77px; padding-top: 20px; font-size: 15px; } .s6 .pick select { height: 41px; }
.sub { height: 61px; flex: none; padding-left: 24px; font-size: 17px; font-weight: 600; line-height: 60px; }
.s8 .pick { margin: 0 17px; height: 95px; padding-top: 37px; font-size: 15px; } .s8 .pick select { height: 46px; }
.s8 .pick { color: #555; } .dim ::placeholder { color: #727272; }

.blank { margin: 0 17px; flex: none; padding-top: 11px; }
.blank input { display: block; width: 100%; height: 58px; padding-top: 10px; font-size: 18px; border-bottom: 2px solid var(--rule); }
.blank .duo { margin: 0; }
.s8 .blank { padding: 0; } .s8 .blank input { height: 75px; padding-top: 30px; }

.shots { display: flex; flex: none; margin: 21px 0 0 11px; }
.shots div { display: flex; width: 231px; gap: 14px; align-items: center; font-size: 13px; line-height: 14px; color: #777; flex: none; }
.shots button { width: 98px; height: 96px; border: 2px solid #d4d4d4; color: #bbb; }
.dim .shots button { border-color: #7e7e7e; color: #777; } .dim .shots div { color: #444; }
.s5 .shots { margin-top: 14px; } .s6 .shots, .s8 .shots { margin-top: 18px; }
.cam { width: 21px; height: 17px; } .pen { width: 21px; height: 20px; }
.s3 .add { margin-top: 62px; }

.opts { flex: none; }
.opts label { display: flex; align-items: center; justify-content: space-between; height: 58px; padding: 0 23px 0 12px; font-size: 16px; color: #222; border: solid #bbb; border-width: 1px 0; margin-bottom: 5px; }
.s5 .opts { margin-top: 8px; background: #f8f8f8; } .opts label { background: #fff; }
[type=radio] { appearance: none; width: 25px; height: 25px; border: 1px solid #bbb; border-radius: 50%; flex: none; }
[type=radio]:checked { border-color: #8ed8ee; background: radial-gradient(circle, #5cc5e5 7px, #fff 8px); }
.s9 .opts label:first-child { height: 54px; border-top: 0; } .s9 .opts label { height: 57px; margin-bottom: 6px; }
.s9 .opts label:last-child { margin-bottom: 12px; }

.legend { list-style: none; display: grid; grid-template-columns: 260px 1fr; gap: 9px 0; padding: 14px 0 0 9px; }
.legend li { display: flex; align-items: center; gap: 3px; height: 34px; font-size: 15px; line-height: 16px; white-space: nowrap; }
.legend i { width: 34px; height: 34px; flex: none; }
.c1 { background: #ffe94a; } .c2 { background: #b06d50; } .c3 { background: #ff7336; } .c4 { background: #3648be; } .c5 { background: #ea1527; } .c6 { background: #060606; }
.s4::before { content: ""; flex: none; height: 11px; border-bottom: 2px solid #ccc; }
.grid { width: 415px; height: 660px; margin: 6px 0 0 6px; }

.s7 .top { height: 58px; padding-top: 13px; } .s7 .status { font-size: 15px; height: 17px; padding: 0 17px 0 27px; } .s7 .bar { height: 20px; margin-top: -2px; } .s7 .bar h2 { font-size: 21px; line-height: 22px; } .s7 .back svg { height: 17px; }
.scrolled { height: 367px; overflow: hidden; margin-top: -1px; flex: none; }
.s7 .field { height: 45px; padding-top: 0; } .s7 .field input { height: 22px; margin-top: -1px; font-size: 16px; }
.scrolled > .field:first-child { margin-top: -4px; } .s7 .field { margin: 0 16px; } .s7 .duo { margin: 0 16px; } .s7 .duo .field { margin: 0; }
.s7 .field .caret { width: 22px; border-right: 2px solid #93a7f5; }
.s7 .opts label { height: 44px; font-size: 15px; } .s7 .opts label:first-child { border-top: 0; height: 42px; }
.s7 [type=radio] { width: 24px; height: 20px; }

.kb { flex: 1; background: #d0d3da; display: flex; flex-direction: column; gap: 10px; }
.kb button { font-size: 21px; }
.sugg { display: grid; grid-template-columns: repeat(3, 1fr); height: 40px; margin-bottom: -5px; background: #b7bdc6; flex: none; }
.sugg span { border-right: 1px solid #ccd1d8; color: #fff; font-size: 26px; line-height: 44px; text-align: center; }
.keys { display: flex; gap: 7px; padding: 0 4px 0 3px; flex: none; }
.keys button { flex: 1 1 0; height: 38px; background: #fff; border-radius: 5px; box-shadow: 0 1px 0 #8d9096; }
.keys.mid { padding: 0 24px; }
.keys .fn { background: #abb1bb; } .low .fn { flex: 0 0 44px; } .low .fn:first-child { margin-right: 10px; } .low .fn:last-child { margin-left: 9px; }
.words button { font-size: 15px; } .words .fn { flex: 0 0 95px; }
.shift { width: 23px; height: 16px; } .del { width: 25px; height: 16px; }
.tools { display: flex; justify-content: space-between; padding: 12px 35px 0 27px; color: #555; }
.globe { width: 29px; height: 26px; } .mic { width: 18px; height: 25px; }
.kb.tall { flex: none; height: 359px; gap: 13px; }
.tall .sugg { height: 48px; } .tall .keys button { height: 48px; } .tall .keys:not(.words) button { font-size: 24px; }
.tall .words .fn { flex-basis: 99px; } .tall .tools { padding: 16px 36px 0 30px; } .tall .globe { height: 29px; } .tall .mic { height: 29px; }

.cut { height: 24px; overflow: hidden; margin: 0 17px; border-bottom: 2px solid var(--rule); flex: none; }
.cut input { width: 100%; height: 20px; margin-top: -8px; font-size: 17px; display: block; }
.s9 .duo .field { height: 58px; padding-top: 4px; font-size: 15px; }
.sample { flex: none; display: flex; justify-content: space-between; height: 51px; padding: 24px 34px 0 11px; font-size: 16px; line-height: 20px; color: #888; text-decoration: none; border-bottom: 2px solid var(--rule); }
.next { transform: rotate(180deg); width: 8px; height: 14px; color: #888; } .sample .next { margin-top: -19px; }

.search { grid-column: 2; height: 36px; margin-top: -4px; border: 1px solid #d5d5d5; border-radius: 6px; padding-left: 12px; font-size: 15px; }
.s11 .bar { grid-template-columns: 57px 1fr 56px; }
.clear { height: 28px; } .clear svg { width: 20px; height: 18px; }
.tabs { display: flex; height: 50px; background: #000; flex: none; }
.tabs a { display: flex; justify-content: center; width: 106px; padding-top: 12px; line-height: 20px; color: #fff; font-size: 15px; font-weight: 600; text-decoration: none; }
.tabs .cur { border-bottom: 3px solid #fff; }
.client { position: relative; flex: none; height: 150px; padding: 8px 17px 0 24px; background: #fff; border: solid #c4c4c4; border-width: 8px 0 2px; border-top-color: #ececec; }
.client h3 { font-size: 22px; font-weight: 600; line-height: 28px; }
.client .type { font-size: 19px; line-height: 28px; }
.client .type b { font-weight: 600; }
.when { position: absolute; right: 17px; top: 2px; font-size: 14px; color: #999; } .when p { display: flex; gap: 6px; align-items: center; justify-content: end; height: 24px; } .when .at { font-size: 17px; color: #222; }
.when .cal { width: 13px; height: 13px; }
.client .row { display: flex; align-items: center; gap: 7px; height: 24px; font-size: 18px; color: #999; white-space: nowrap; }
.client .row .next { margin-left: auto; margin-right: 5px; width: 9px; height: 16px; }
.s11 { background: #fafafa; } .s11 .kb { margin-top: auto; }
.loading { width: 88px; height: 88px; margin: 346px 0 0 173px; border-radius: 8px; background: #e5e5e5; display: grid; place-items: center; }
.loading svg { width: 44px; height: 44px; }

/* reviewer's notes and ink */
.note { position: absolute; font-family: "Noto Sans", "Open Sans", sans-serif; font-size: 16px; line-height: 23px; color: #ed1c24; white-space: nowrap; }
.n1 { left: 62px; top: 145px; width: 285px; height: 117px; padding: 10px 21px; background: #fff; font-weight: 700; }
.n2 { left: 481px; top: 101px; font-weight: 700; }
.n3 { left: 535px; top: 466px; width: 289px; height: 47px; padding: 3px 9px; background: #fff; }
.n4 { left: 1384px; top: 53px; } .n5 { left: 1388px; top: 158px; } .n6 { left: 1410px; top: 228px; }
.n7 { left: 1452px; top: 330px; } .n8 { left: 1511px; top: 587px; } .n9 { left: 194px; top: 964px; }
.n10 { left: 599px; top: 1116px; } .n11 { left: 645px; top: 1275px; } .n12 { left: 1426px; top: 1132px; }
.n13 { left: 1046px; top: 1256px; } .n14 { left: 1167px; top: 1320px; } .n15 { left: 1478px; top: 1455px; }
.n16 { left: 983px; top: 1576px; } .n17 { left: 995px; top: 1635px; } .n18 { left: 1026px; top: 1728px; }
.n19 { left: 1012px; top: 1758px; } .n20 { left: 36px; top: 2699px; } .n21 { left: 520px; top: 3045px; }
.n22 { left: 545px; top: 3164px; } .n23 { left: 76px; top: 3480px; } .n24 { left: 1067px; top: 3070px; } .n25 { left: 1420px; top: 2996px; }
.a1 { left: 923px; top: 90px; } .a2 { left: 1129px; top: 87px; } .a3 { left: 918px; top: 161px; } .a4 { left: 502px; top: 1109px; } .a5 { left: 509px; top: 1191px; }
.a6 { left: 506px; top: 1280px; } .a7 { left: 511px; top: 1546px; } .a8 { left: 508px; top: 1600px; } .a9 { left: 510px; top: 1654px; } .a10 { left: 714px; top: 1650px; }
.ink { position: absolute; left: 0; top: 0; pointer-events: none; }
.pen-5 { fill: none; stroke: #ed1c24; stroke-width: 5; stroke-linejoin: miter; }
```
